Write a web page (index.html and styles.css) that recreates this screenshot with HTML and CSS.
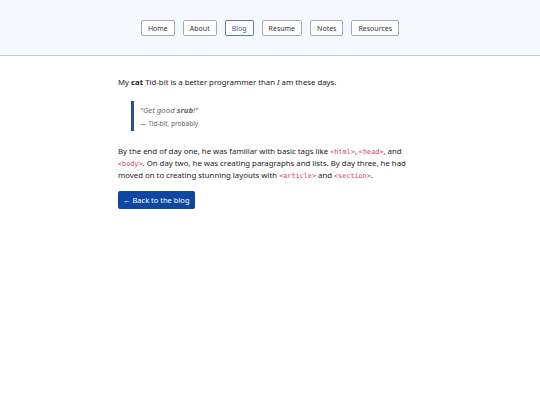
FILE: index.html
```html
<!DOCTYPE html>
<html>
<head>
<meta charset="utf-8">
<link rel="stylesheet" href="styles.css">
</head>
<body>
<header class="site-header">
  <nav class="nav">
    <a class="nav-btn" href="#">Home</a>
    <a class="nav-btn" href="#">About</a>
    <a class="nav-btn active" href="#">Blog</a>
    <a class="nav-btn" href="#">Resume</a>
    <a class="nav-btn" href="#">Notes</a>
    <a class="nav-btn" href="#">Resources</a>
  </nav>
</header>
<main class="content">
  <p class="lead">My <b>cat</b> Tid-bit is a better programmer than <i>I</i> am these days.</p>
  <blockquote class="quote">
    <p class="quote-text">"Get good <b>srub</b>!"</p>
    <p class="quote-cite">— Tid-bit, probably</p>
  </blockquote>
  <p class="body-text">By the end of day one, he was familiar with basic tags like <code>&lt;html&gt;</code>, <code>&lt;head&gt;</code>, and <code>&lt;body&gt;</code>. On day two, he was creating paragraphs and lists. By day three, he had moved on to creating stunning layouts with <code>&lt;article&gt;</code> and <code>&lt;section&gt;</code>.</p>
  <a class="back-btn" href="#">← Back to the blog</a>
</main>
</body>
</html>
```
FILE: styles.css
```css
html, body {
  margin: 0;
  padding: 0;
  background: #ffffff;
  font-family: "Noto Sans", "Open Sans", sans-serif;
  color: #222;
}
.site-header {
  background: #f5f8ff;
  border-bottom: 1px solid #c8c8d0;
  height: 56px;
  box-sizing: border-box;
  display: flex;
  justify-content: center;
  padding-top: 20px;
}
.nav {
  display: flex;
  gap: 8px;
  height: 16px;
}
.nav-btn {
  display: flex;
  align-items: center;
  padding: 0 6px;
  height: 16px;
  box-sizing: border-box;
  border: 1px solid #a9a9b0;
  border-radius: 2px;
  background: #fff;
  color: #333;
  font-size: 7px;
  text-decoration: none;
}
.nav-btn.active {
  border-color: #5a7cb0;
  color: #3a5f9a;
}
.content {
  width: 304px;
  margin: 0 auto;
  padding-top: 20px;
  font-size: 7.8px;
  line-height: 12px;
}
.lead {
  margin: 0 0 13px;
}
.quote {
  margin: 0 0 14px 13px;
  padding: 3px 0 1px 6px;
  border-left: 3px solid #2a4f8f;
}
.quote-text {
  margin: 0 0 2px;
  font-style: italic;
  color: #666;
}
.quote-cite {
  margin: 0;
  font-size: 6.5px;
  color: #666;
}
.body-text {
  margin: 0 0 10px;
}
code {
  font-family: "DejaVu Sans Mono", monospace;
  font-size: 6.8px;
  line-height: 1;
  color: #d03a78;
}
.back-btn {
  display: inline-block;
  background: #0d47a1;
  color: #fff;
  text-decoration: none;
  border-radius: 2px;
  padding: 3px 5px;
  font-size: 7.5px;
  line-height: 12px;
}
```
